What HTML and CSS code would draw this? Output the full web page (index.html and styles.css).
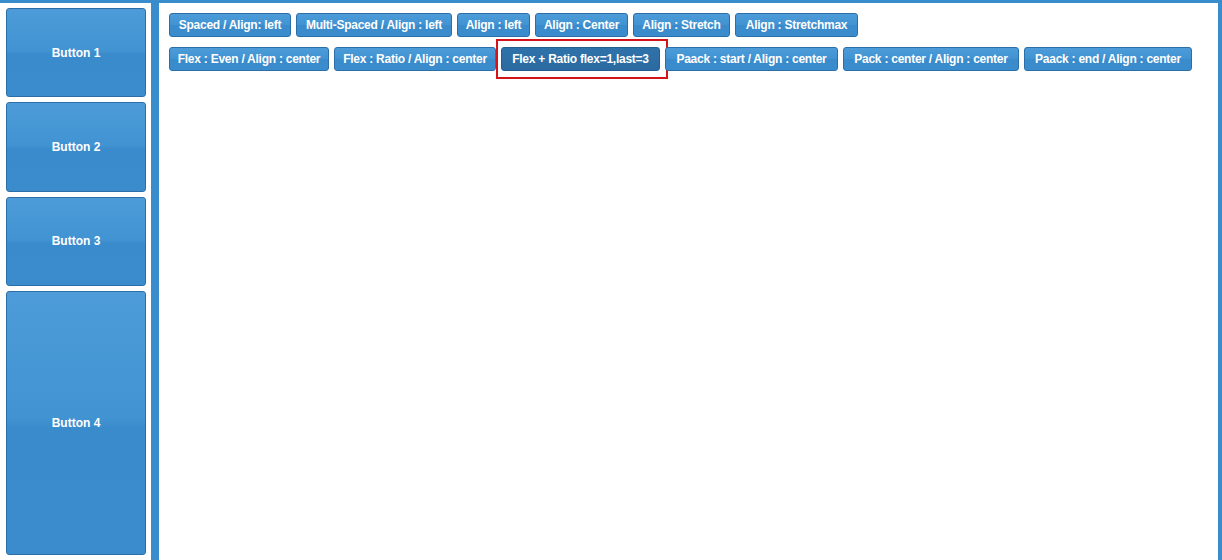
FILE: index.html
```html
<!DOCTYPE html>
<html>
<head>
<meta charset="utf-8">
<link rel="stylesheet" href="styles.css">
</head>
<body>
<div class="viewport">
  <div class="west">
    <div class="btn side f1">Button 1</div>
    <div class="btn side f1">Button 2</div>
    <div class="btn side f1">Button 3</div>
    <div class="btn side f3">Button 4</div>
  </div>
  <div class="center">
    <div class="row">
      <div class="btn tb w-spaced">Spaced / Align: left</div>
      <div class="btn tb w-multi">Multi-Spaced / Align : left</div>
      <div class="btn tb w-left">Align : left</div>
      <div class="btn tb w-center">Align : Center</div>
      <div class="btn tb w-stretch">Align : Stretch</div>
      <div class="btn tb w-stretchmax">Align : Stretchmax</div>
    </div>
    <div class="row">
      <div class="btn tb w-even">Flex : Even / Align : center</div>
      <div class="btn tb w-ratio">Flex : Ratio / Align : center</div>
      <div class="btn tb w-flexratio pressed">Flex + Ratio flex=1,last=3<span class="mark"></span></div>
      <div class="btn tb w-pstart">Paack : start / Align : center</div>
      <div class="btn tb w-pcenter">Pack : center / Align : center</div>
      <div class="btn tb w-pend">Paack : end / Align : center</div>
    </div>
  </div>
</div>
</body>
</html>
```
FILE: styles.css
```css
html, body {
  margin: 0;
  padding: 0;
  height: 560px;
  overflow: hidden;
}
body {
  background: #3a8dcd;
  font-family: "Liberation Sans", Arial, sans-serif;
}
.viewport {
  display: flex;
  padding-top: 3px;
  height: 557px;
  gap: 8px;
  padding-right: 4px;
}
.west {
  width: 140px;
  background: #fff;
  padding: 5px 5px 5px 6px;
  display: flex;
  flex-direction: column;
  gap: 5px;
}
.center {
  flex: 1;
  background: #fff;
  padding: 10px 10px;
  display: flex;
  flex-direction: column;
  gap: 10px;
}
.btn {
  box-sizing: border-box;
  border: 1px solid #2b6fa9;
  border-radius: 3px;
  background: linear-gradient(#4d9cd9, #4193d2 48%, #3a8bcb 52%, #3a8ccc);
  color: #fff;
  font-weight: bold;
  font-size: 12px;
  display: flex;
  align-items: center;
  justify-content: center;
  white-space: nowrap;
}
.side { width: 140px; }
.f1 { flex: 1; }
.f3 { flex: 3; }
.row {
  display: flex;
  gap: 5px;
}
.tb {
  flex: none;
  height: 24px;
  padding: 0;
  letter-spacing: -0.25px;
  position: relative;
}
.w-spaced { width: 122px; }
.w-multi { width: 156px; }
.w-left { width: 73px; }
.w-center { width: 93px; }
.w-stretch { width: 97px; }
.w-stretchmax { width: 123px; }
.w-even { width: 160px; }
.w-ratio { width: 162px; }
.w-flexratio { width: 159px; }
.w-pstart { width: 173px; }
.w-pcenter { width: 176px; }
.w-pend { width: 168px; }
.pressed {
  background: linear-gradient(#2f72aa, #2a6aa0);
  border-color: #255f91;
}
.mark {
  position: absolute;
  left: -6px;
  top: -9px;
  right: -9px;
  bottom: -9px;
  border: 2px solid #d4141b;
}
```
